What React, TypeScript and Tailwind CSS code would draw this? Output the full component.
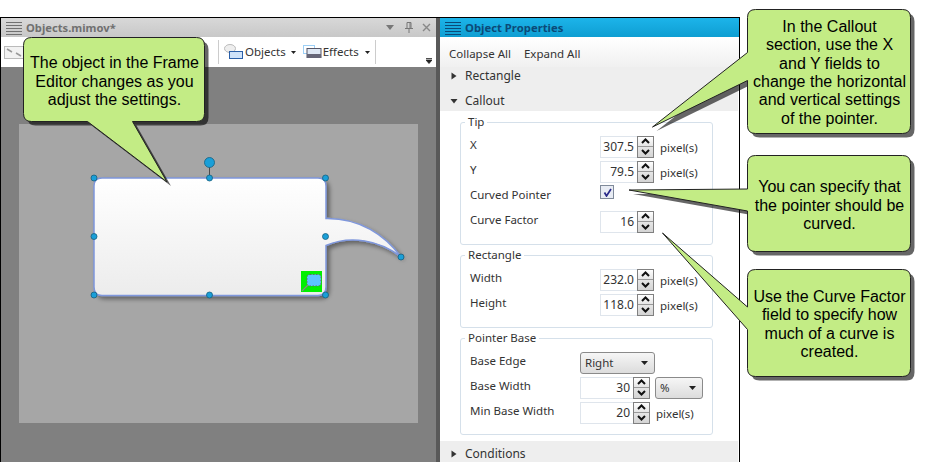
import React from "react";

const ui = "font-['Noto_Sans',sans-serif] text-[11.5px] leading-none text-[#333]";

function Lines({ color, className }: { color: string; className: string }) {
  return (
    <svg width="16" height="14" viewBox="0 0 16 14" className={className}>
      {[1, 4, 7, 10, 13].map((y) => (
        <line key={y} x1="0" x2="16" y1={y + 0.5} y2={y + 0.5} stroke={color} strokeWidth="1" />
      ))}
    </svg>
  );
}

function Caret({ open, className }: { open?: boolean; className?: string }) {
  return (
    <svg width="8" height="8" viewBox="0 0 8 8" className={className}>
      {open ? <path d="M0.5 2 H7.5 L4 6.5 Z" fill="#333" /> : <path d="M1.5 0.5 L6.5 4 L1.5 7.5 Z" fill="#333" />}
    </svg>
  );
}

function Spin() {
  return (
    <div className="w-[17px] h-full border border-[#808080] bg-[#eee] flex flex-col shrink-0">
      <div className="flex-1 flex items-center justify-center border-b border-[#999] bg-gradient-to-b from-white to-[#e6e6e6]">
        <svg width="9" height="6" viewBox="0 0 9 6"><path d="M1 5 L4.5 1.5 L8 5" fill="none" stroke="#111" strokeWidth="2" /></svg>
      </div>
      <div className="flex-1 flex items-center justify-center bg-gradient-to-b from-[#e6e6e6] to-[#d4d4d4]">
        <svg width="9" height="6" viewBox="0 0 9 6"><path d="M1 1 L4.5 4.5 L8 1" fill="none" stroke="#111" strokeWidth="2" /></svg>
      </div>
    </div>
  );
}

function Field({ value, w = "w-[54px]", unit }: { value: string; w?: string; unit?: string }) {
  return (
    <div className="flex items-center h-[22px]">
      <div className={`${w} h-full flex`}>
        <div className="flex-1 h-full border border-[#dfe5ec] border-r-0 bg-white flex items-center justify-end pr-[3px] text-[12px] text-[#333]">{value}</div>
        <Spin />
      </div>
      {unit ? <span className="ml-[6px] mt-[2px]">{unit}</span> : null}
    </div>
  );
}

function Combo({ value, w }: { value: string; w: string }) {
  return (
    <div className={`${w} h-[22px] border border-[#8a8a8a] rounded-[3px] bg-gradient-to-b from-[#f6f6f6] to-[#dcdcdc] flex items-center justify-between pl-[4px] pr-[6px]`}>
      <span>{value}</span>
      <svg width="7" height="4" viewBox="0 0 7 4"><path d="M0 0 H7 L3.5 4 Z" fill="#222" /></svg>
    </div>
  );
}

function Row({ label, labelW = "w-[130px]", children }: { label: string; labelW?: string; children: React.ReactNode }) {
  return (
    <div className="flex items-center h-[25px]">
      <span className={`${labelW} -mt-[4px] shrink-0`}>{label}</span>
      {children}
    </div>
  );
}

function Group({ title, h, children, mb }: { title: string; h: string; mb: string; children: React.ReactNode }) {
  return (
    <div className={`relative ${h} ${mb} w-[253px] border border-[#d5e0ea] rounded-[3px] pl-[9px] pt-[11px]`}>
      <span className="absolute left-[4px] -top-[7px] bg-white px-[3px] leading-[12px]">{title}</span>
      {children}
    </div>
  );
}

function SectionRow({ label, open, h }: { label: string; open?: boolean; h: string }) {
  return (
    <div className={`flex items-center ${h} pl-[10px] bg-[#eeeeee] gap-[7px]`}>
      <Caret open={open} />
      <span className="text-[12px]">{label}</span>
    </div>
  );
}

function Handle({ x, y, r = 3 }: { x: number; y: number; r?: number }) {
  return <circle cx={x} cy={y} r={r} fill="#1a9fd8" stroke="#15607f" strokeWidth="0.8" />;
}

const calloutPaths = [
  "M32 37.5 H196.5 Q204.5 37.5 204.5 45.5 V113.5 Q204.5 121.5 196.5 121.5 H132.5 L167 182 L87.5 121.5 H31.5 Q23.5 121.5 23.5 113.5 V45.5 Q23.5 37.5 31.5 37.5 Z",
  "M755.5 9.5 H902.5 Q910.5 9.5 910.5 17.5 V125.5 Q910.5 133.5 902.5 133.5 H755.5 Q747.5 133.5 747.5 125.5 V80.5 L652.5 127 L747.5 52.5 V17.5 Q747.5 9.5 755.5 9.5 Z",
  "M755.5 155.5 H902.5 Q910.5 155.5 910.5 163.5 V243.5 Q910.5 251.5 902.5 251.5 H755.5 Q747.5 251.5 747.5 243.5 V211 L629 190 L747.5 189 V163.5 Q747.5 155.5 755.5 155.5 Z",
  "M755.5 269.5 H902.5 Q910.5 269.5 910.5 277.5 V368.5 Q910.5 376.5 902.5 376.5 H755.5 Q747.5 376.5 747.5 368.5 V329.5 L662.5 233 L747.5 307 V277.5 Q747.5 269.5 755.5 269.5 Z",
];

function CalloutText({ className, children }: { className: string; children: React.ReactNode }) {
  return (
    <div className={`absolute flex items-center justify-center text-center font-['Liberation_Sans',sans-serif] text-[16px] leading-[18.4px] text-black ${className}`}>
      <div>{children}</div>
    </div>
  );
}

export default function App() {
  return (
    <div className="relative w-[926px] h-[462px] bg-white overflow-hidden">
      <div className="pt-[17px] w-[740px] h-[462px]">
        <div className={`h-[445px] border border-black border-b-0 flex ${ui}`}>
          {/* Left panel */}
          <div className="w-[435px] flex flex-col">
            <div className="h-[19px] bg-gradient-to-b from-[#d8d8d8] to-[#c8c8c8] flex items-center pl-[5px] pr-[5px]">
              <Lines color="#707070" className="mr-[4px]" />
              <span className="font-bold text-[11.2px] text-[#707070]">Objects.mimov*</span>
              <div className="ml-auto flex items-center gap-[9px]">
                <svg width="8" height="5" viewBox="0 0 8 5" className="mr-[2px]"><path d="M0 0 H8 L4 5 Z" fill="#777" /></svg>
                <svg width="8" height="11" viewBox="0 0 8 11"><path d="M2 0.5 H6 V6.5 H2 Z M0 6.5 H8 M4 7 V11 M5 1 V6" fill="none" stroke="#777" /></svg>
                <svg width="9" height="9" viewBox="0 0 9 9"><path d="M1 1 L8 8 M8 1 L1 8" stroke="#888" strokeWidth="1.4" /></svg>
              </div>
            </div>
            <div className="h-[30px] bg-white flex items-center pl-[3px] relative">
              <svg width="20" height="13" viewBox="0 0 20 13" className="mr-[194px]">
                <rect x="0.5" y="0.5" width="19" height="12" fill="#f2f2f2" stroke="#bbb" />
                <path d="M3 3 L8 6 M12 7 L17 10" stroke="#999" strokeWidth="1.5" />
              </svg>
              <div className="w-px h-[24px] bg-[#ccc] mr-[5px]" />
              <svg width="20" height="16" viewBox="0 0 20 16">
                <ellipse cx="6" cy="4.5" rx="5.5" ry="4" fill="#eee" stroke="#bbb" />
                <rect x="5.5" y="7.5" width="13" height="7" fill="#cfe3fa" stroke="#2a5fa8" />
              </svg>
              <span className="ml-[1px]">Objects</span>
              <svg width="5" height="3" viewBox="0 0 5 3" className="ml-[5px]"><path d="M0 0 H5 L2.5 3 Z" fill="#222" /></svg>
              <svg width="20" height="14" viewBox="0 0 20 14" className="ml-[7px]">
                <rect x="0.5" y="0.5" width="11" height="8" fill="none" stroke="#3aa0ee" strokeDasharray="1 1" />
                <rect x="4" y="3.5" width="14" height="9" fill="#dfe8f4" stroke="#556" />
                <rect x="4" y="9" width="14" height="4" fill="#667" />
              </svg>
              <span>Effects</span>
              <svg width="5" height="3" viewBox="0 0 5 3" className="ml-[6px]"><path d="M0 0 H5 L2.5 3 Z" fill="#222" /></svg>
              <div className="w-px h-[24px] bg-[#ccc] ml-[5px]" />
              <svg width="6" height="6" viewBox="0 0 6 6" className="absolute right-[4px] bottom-[3px]"><path d="M0 0.5 H6 M0 2 H6 L3 5.5 Z" stroke="#222" strokeWidth="0.8" fill="#222" /></svg>
            </div>
            <div className="flex-1 bg-[#808080] pt-[57px] pl-[18px]">
              <div className="w-[399px] h-[299px] bg-[#a6a6a6]">
                <svg width="399" height="299" viewBox="19 124 399 299">
                  <defs>
                    <linearGradient id="objFill" x1="0" y1="0" x2="0" y2="1">
                      <stop offset="0" stopColor="#ffffff" />
                      <stop offset="1" stopColor="#ececec" />
                    </linearGradient>
                    <filter id="objShadow" x="-10%" y="-10%" width="125%" height="125%">
                      <feDropShadow dx="3" dy="3" stdDeviation="2" floodColor="#000" floodOpacity="0.4" />
                    </filter>
                  </defs>
                  <path
                    d="M102 178 H318 Q326 178 326 186 V218.5 C360 218 385 235 401 257 C380 240 350 235 326 245.5 V287 Q326 295.5 318 295.5 H102 Q94 295.5 94 287 V186 Q94 178 102 178 Z"
                    fill="url(#objFill)"
                    stroke="#7f97dc"
                    strokeWidth="1.5"
                    filter="url(#objShadow)"
                  />
                  <rect x="301" y="271" width="21" height="21" fill="#00f000" />
                  <path d="M310 274.5 H318 Q321 274.5 321 277.5 V283 Q321 286 318 286 H310 Q307 286 307 283 V277.5 Q307 274.5 310 274.5 Z" fill="#5cc3ff" stroke="#666" strokeDasharray="1.5 1.5" />
                  <line x1="308" y1="285" x2="302" y2="291" stroke="#888" strokeWidth="1.2" />
                  <line x1="209.5" y1="163" x2="209.5" y2="178" stroke="#333" strokeWidth="0.8" />
                  <Handle x={209.5} y={162.5} r={5} />
                  <Handle x={94} y={178} />
                  <Handle x={209.5} y={178} />
                  <Handle x={325.5} y={178} />
                  <Handle x={94} y={236.5} />
                  <Handle x={325.5} y={236.5} />
                  <Handle x={94} y={295} />
                  <Handle x={209.5} y={295} />
                  <Handle x={325.5} y={295} />
                  <Handle x={401} y={257} />
                </svg>
              </div>
            </div>
          </div>
          <div className="w-[4px] bg-[#595959]" />
          {/* Right panel */}
          <div className="flex-1 flex flex-col bg-white">
            <div className="h-[19px] bg-gradient-to-b from-[#1cb4ea] to-[#0e9ed2] flex items-center pl-[5px]">
              <Lines color="#0b4a78" className="mr-[4px]" />
              <span className="font-bold text-[11.3px] text-[#0b4a78]">Object Properties</span>
            </div>
            <div className="h-[30px] bg-gradient-to-b from-white to-[#f0f0f0] flex items-center pl-[9px] pt-[4px] gap-[13px]">
              <span>Collapse All</span>
              <span>Expand All</span>
            </div>
            <div className="mr-[1px]">
              <SectionRow label="Rectangle" h="h-[17px]" />
              <SectionRow label="Callout" open h="h-[27px] pt-[6px]" />
            </div>
            <div className="flex-1 pl-[20px] pt-[11px]">
              <Group title="Tip" h="h-[123px]" mb="mb-[10px]">
                <Row label="X"><Field value="307.5" unit="pixel(s)" /></Row>
                <Row label="Y"><Field value="79.5" unit="pixel(s)" /></Row>
                <Row label="Curved Pointer">
                  <div className="w-[14px] h-[14px] -mt-[9px] border border-[#7f8a9a] bg-[#e8ecf4] flex items-center justify-center">
                    <svg width="9" height="9" viewBox="0 0 9 9"><path d="M1.5 4.5 L3.5 8 L8 1" fill="none" stroke="#2a2a8a" strokeWidth="1.7" /></svg>
                  </div>
                </Row>
                <Row label="Curve Factor"><Field value="16" /></Row>
              </Group>
              <Group title="Rectangle" h="h-[73px]" mb="mb-[10px]">
                <Row label="Width"><Field value="232.0" unit="pixel(s)" /></Row>
                <Row label="Height"><Field value="118.0" unit="pixel(s)" /></Row>
              </Group>
              <Group title="Pointer Base" h="h-[97px]" mb="mb-0">
                <Row label="Base Edge" labelW="w-[110px]"><Combo value="Right" w="w-[75px]" /></Row>
                <Row label="Base Width" labelW="w-[110px]">
                  <Field value="30" w="w-[70px]" />
                  <div className="ml-[5px]"><Combo value="%" w="w-[48px]" /></div>
                </Row>
                <Row label="Min Base Width" labelW="w-[110px]"><Field value="20" w="w-[70px]" unit="pixel(s)" /></Row>
              </Group>
            </div>
            <div className="mr-[1px]">
              <SectionRow label="Conditions" h="h-[21px] pt-[4px]" />
            </div>
          </div>
        </div>
      </div>

      {/* Annotation callouts */}
      <svg className="absolute inset-0" width="926" height="462" viewBox="0 0 926 462">
        {calloutPaths.map((d) => (
          <g key={d}>
            <path d={d} transform="translate(4 4)" fill="#000" opacity="0.6" />
            <path d={d} fill="#c3ec85" stroke="#222" strokeWidth="1" />
          </g>
        ))}
      </svg>
      <CalloutText className="left-[24px] top-[40px] w-[181px] h-[84px]">
        The object in the Frame<br />Editor changes as you<br />adjust the settings.
      </CalloutText>
      <CalloutText className="left-[748px] top-[11px] w-[163px] h-[124px]">
        In the Callout<br />section, use the X<br />and Y fields to<br />change the horizontal<br />and vertical settings<br />of the pointer.
      </CalloutText>
      <CalloutText className="left-[748px] top-[158px] w-[163px] h-[96px]">
        You can specify that<br />the pointer should be<br />curved.
      </CalloutText>
      <CalloutText className="left-[748px] top-[271px] w-[163px] h-[107px]">
        Use the Curve Factor<br />field to specify how<br />much of a curve is<br />created.
      </CalloutText>
    </div>
  );
}
